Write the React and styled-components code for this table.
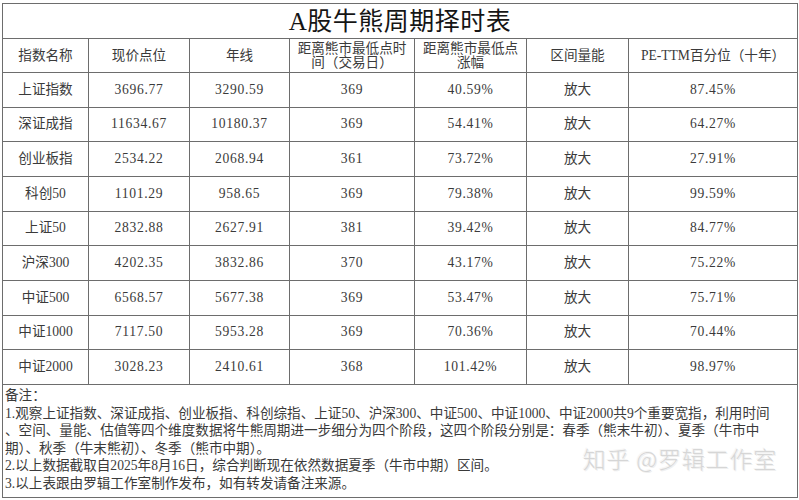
import React from 'react';
import styled, { createGlobalStyle } from 'styled-components';

const headers = [
  ['指数名称'],
  ['现价点位'],
  ['年线'],
  ['距离熊市最低点时', '间（交易日）'],
  ['距离熊市最低点', '涨幅'],
  ['区间量能'],
  ['PE-TTM百分位（十年）']
];

const rows = [
  ['上证指数', '3696.77', '3290.59', '369', '40.59%', '放大', '87.45%'],
  ['深证成指', '11634.67', '10180.37', '369', '54.41%', '放大', '64.27%'],
  ['创业板指', '2534.22', '2068.94', '361', '73.72%', '放大', '27.91%'],
  ['科创50', '1101.29', '958.65', '369', '79.38%', '放大', '99.59%'],
  ['上证50', '2832.88', '2627.91', '381', '39.42%', '放大', '84.77%'],
  ['沪深300', '4202.35', '3832.86', '370', '43.17%', '放大', '75.22%'],
  ['中证500', '6568.57', '5677.38', '369', '53.47%', '放大', '75.71%'],
  ['中证1000', '7117.50', '5953.28', '369', '70.36%', '放大', '70.44%'],
  ['中证2000', '3028.23', '2410.61', '368', '101.42%', '放大', '98.97%']
];

const notes = [
  '备注：',
  '1.观察上证指数、深证成指、创业板指、科创综指、上证50、沪深300、中证500、中证1000、中证2000共9个重要宽指，利用时间',
  '、空间、量能、估值等四个维度数据将牛熊周期进一步细分为四个阶段，这四个阶段分别是：春季（熊末牛初）、夏季（牛市中',
  '期）、秋季（牛末熊初）、冬季（熊市中期）。',
  '2.以上数据截取自2025年8月16日，综合判断现在依然数据夏季（牛市中期）区间。',
  '3.以上表跟由罗辑工作室制作发布，如有转发请备注来源。'
];

const GlobalStyle = createGlobalStyle`
  body {
    margin: 0;
    background: #fff;
    font-family: "Liberation Serif", "Noto Sans CJK SC", serif;
    color: #3a3a3a;
  }
`;

const Page = styled.div`
  padding: 3px 2px 2px 2px;
  width: 799px;
  box-sizing: border-box;
`;

const Sheet = styled.div`
  display: grid;
  width: 796px;
  grid-template-columns: 86px 101px 100px 125px 112px 102px 169px;
  grid-template-rows: 35px 34px repeat(9, 34.667px) 113px;
  border-left: 1px solid #6d6d6d;
  border-top: 1px solid #6d6d6d;
  box-sizing: border-box;
`;

const Cell = styled.div`
  box-sizing: border-box;
  border-right: 1px solid #6d6d6d;
  border-bottom: 1px solid #6d6d6d;
  display: flex;
  flex-direction: column;
  align-items: center;
  justify-content: center;
  text-align: center;
  font-size: 13.6px;
  letter-spacing: ${p => (p.$num ? '0.7px' : '0')};
  line-height: ${p => (p.$head ? '14px' : '16px')};
  white-space: nowrap;
  grid-column: ${p => p.$span || 'auto'};
`;

const Title = styled(Cell)`
  font-size: 25px;
  color: #151515;
  padding-top: 2px;
  letter-spacing: 0.5px;
`;

const Notes = styled(Cell)`
  position: relative;
  align-items: flex-start;
  justify-content: flex-start;
  text-align: left;
  padding: 2px 0 0 2px;
  line-height: 17.6px;
  font-size: 13.6px;
`;

const NoteLine = styled.div`
  white-space: nowrap;
`;

const Watermark = styled.div`
  position: absolute;
  right: 20px;
  top: 65px;
  font-family: "Noto Sans CJK SC", sans-serif;
  font-size: 23px;
  font-weight: 300;
  letter-spacing: 0.8px;
  color: #d6d6d6;
  text-shadow: 1px 1px 0 #efefef, -1px -1px 0 #f6f6f6;
`;

const isNum = s => /^[\d.%]+$/.test(s);

export default function App() {
  return (
    <Page>
      <GlobalStyle />
      <Sheet>
        <Title $span="1 / -1">A股牛熊周期择时表</Title>
        {headers.map((h, i) => (
          <Cell key={'h' + i} $head>
            {h.map(line => (
              <span key={line}>{line}</span>
            ))}
          </Cell>
        ))}
        {rows.map((r, ri) =>
          r.map((v, ci) => (
            <Cell key={ri + '-' + ci} $num={isNum(v)}>
              {v}
            </Cell>
          ))
        )}
        <Notes $span="1 / -1">
          {notes.map(n => (
            <NoteLine key={n}>{n}</NoteLine>
          ))}
          <Watermark>知乎 @罗辑工作室</Watermark>
        </Notes>
      </Sheet>
    </Page>
  );
}
